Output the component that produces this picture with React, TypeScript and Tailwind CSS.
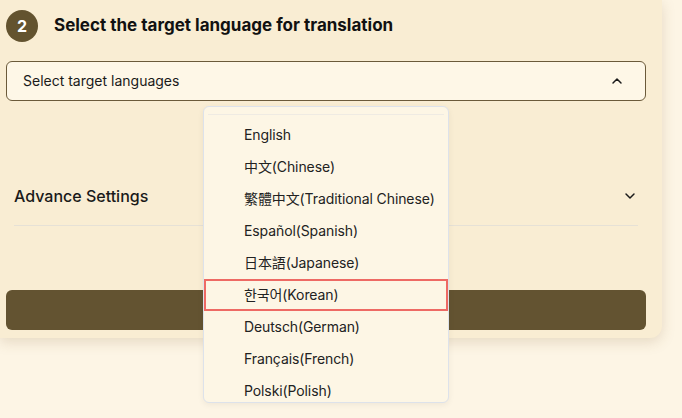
import { ChevronDown, ChevronUp } from 'lucide-react';

const languages = [
  'English',
  '中文(Chinese)',
  '繁體中文(Traditional Chinese)',
  'Español(Spanish)',
  '日本語(Japanese)',
  '한국어(Korean)',
  'Deutsch(German)',
  'Français(French)',
  'Polski(Polish)',
];

export default function App() {
  return (
    <div
      className="h-[418px] w-[682px] overflow-hidden bg-[#fdf5e5]"
      style={{ fontFamily: 'Inter, "Noto Sans CJK SC", "Noto Sans CJK KR", sans-serif' }}
    >
      <div className="w-[662px] rounded-br-xl bg-[#f9edd3] pb-2 shadow-[0_4px_14px_rgba(120,90,40,0.18)]">
        <div className="flex items-center gap-4 px-1.5 pt-2.5">
          <div className="flex h-8 w-8 items-center justify-center rounded-full bg-[#63532f] text-base font-bold text-white">
            2
          </div>
          <h2 className="text-[17px] font-bold text-[#111111]">Select the target language for translation</h2>
        </div>

        <div className="relative ml-1.5 mt-[19px] w-[640px]">
          <div className="flex h-[40px] items-center justify-between rounded-md border border-[#6b5a3a] bg-[#fef7e7] pl-4 pr-5">
            <span className="text-sm text-[#1a1a1a]">Select target languages</span>
            <ChevronUp className="h-4 w-4 text-[#1a1a1a]" strokeWidth={2.2} />
          </div>

          <div className="absolute left-[197px] top-[45px] z-10 h-[297px] w-[246px] overflow-hidden rounded-md border border-[#dde2ea] bg-[#fdf6e5] shadow-[0_2px_6px_rgba(0,0,0,0.06)]">
            <div className="mx-1 mt-[7px] border-t border-[#efebe3]" />
            <ul className="mt-1">
              {languages.map((lang) => (
                <li
                  key={lang}
                  className={`flex h-8 items-center pl-10 text-sm tracking-[-0.1px] text-[#222222] ${
                    lang.startsWith('한국어') ? 'border-2 border-[#ee6a64] pl-[38px]' : ''
                  }`}
                >
                  {lang}
                </li>
              ))}
            </ul>
          </div>
        </div>

        <div className="ml-3.5 mt-[83px] flex w-[624px] items-center justify-between border-b border-[#e6e1d6] pb-[17px]">
          <span className="text-base font-medium text-[#1a1a1a]">Advance Settings</span>
          <ChevronDown className="h-4 w-4 text-[#1a1a1a]" strokeWidth={2.2} />
        </div>

        <button className="ml-1.5 mt-16 block h-10 w-[640px] rounded-md bg-[#635331]" />
      </div>
    </div>
  );
}
